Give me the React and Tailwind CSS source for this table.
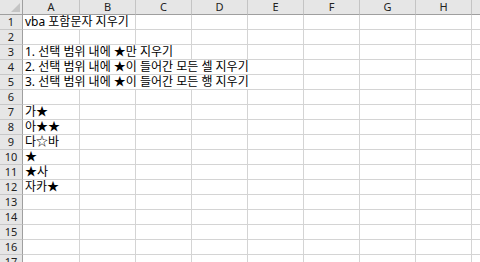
import React from "react";

const COLS = ["A", "B", "C", "D", "E", "F", "G", "H"];
const W = [57, 56, 56, 56, 56, 56, 56, 56];

const DATA = {
  1: { text: "vba 포함문자 지우기", span: 2 },
  3: { text: "1. 선택 범위 내에 ★만 지우기", span: 3 },
  4: { text: "2. 선택 범위 내에 ★이 들어간 모든 셀 지우기", span: 5 },
  5: { text: "3. 선택 범위 내에 ★이 들어간 모든 행 지우기", span: 5 },
  7: { text: "가★", span: 1 },
  8: { text: "아★★", span: 1 },
  9: { text: "다☆바", span: 1 },
  10: { text: "★", span: 1 },
  11: { text: "★사", span: 1 },
  12: { text: "자카★", span: 1 },
};

const cellFont = { fontFamily: '"Noto Sans", "Noto Sans CJK KR", sans-serif' };

function Row({ n }) {
  const d = DATA[n];
  const cells = [];
  let i = 0;
  while (i < COLS.length) {
    if (i === 0 && d) {
      const w = W.slice(0, d.span).reduce((a, b) => a + b, 0);
      cells.push(
        <div
          key={i}
          className="shrink-0 h-full border-r border-b border-[#d4d4d4] pl-[2px] text-[12px] leading-[14px] text-black whitespace-nowrap"
          style={{ width: w, ...cellFont }}
        >
          {d.text}
        </div>
      );
      i += d.span;
    } else {
      cells.push(
        <div
          key={i}
          className="shrink-0 h-full border-r border-b border-[#d4d4d4]"
          style={{ width: W[i] }}
        />
      );
      i += 1;
    }
  }
  return (
    <div className="flex h-[15px]">
      <div
        className="shrink-0 w-[23px] h-full bg-[#e6e6e6] border-r border-r-[#9f9f9f] border-b border-b-[#c8c8c8] text-center text-[11px] leading-[14px] text-[#222]"
        style={{ fontFamily: '"Noto Sans", sans-serif' }}
      >
        {n}
      </div>
      {cells}
      <div className="flex-1 h-full border-b border-[#d4d4d4]" />
    </div>
  );
}

export default function App() {
  const rows = Array.from({ length: 17 }, (_, k) => k + 1);
  return (
    <div className="w-[480px] h-[262px] overflow-hidden bg-white">
      <div className="flex h-[15px]">
        <div className="relative shrink-0 w-[23px] h-full bg-[#e6e6e6] border-r border-r-[#9f9f9f] border-b border-b-[#9f9f9f]">
          <div className="absolute right-[2px] bottom-[2px] w-0 h-0 border-l-[9px] border-l-transparent border-b-[9px] border-b-[#c4c4c4]" />
        </div>
        {COLS.map((c, i) => (
          <div
            key={c}
            className="shrink-0 h-full bg-[#e6e6e6] border-r border-r-[#c4c4c4] border-b border-b-[#9f9f9f] text-center text-[11px] leading-[14px] text-[#222]"
            style={{ width: W[i], fontFamily: '"Noto Sans", sans-serif' }}
          >
            {c}
          </div>
        ))}
        <div className="flex-1 h-full bg-[#e6e6e6] border-b border-b-[#9f9f9f]" />
      </div>
      {rows.map((n) => (
        <Row key={n} n={n} />
      ))}
    </div>
  );
}
